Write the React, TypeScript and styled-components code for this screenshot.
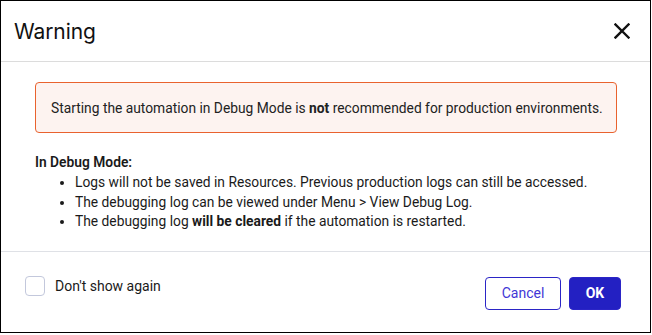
import React from "react";
import styled, { createGlobalStyle } from "styled-components";

const Global = createGlobalStyle`
  html, body { margin: 0; padding: 0; background: #ffffff; }
  body { font-family: Roboto, "Liberation Sans", Arial, sans-serif; color: #1a1a1a; }
  * { box-sizing: border-box; }
`;

const Dialog = styled.div`
  width: 651px;
  height: 333px;
  border: 1px solid #000;
  background: #fff;
  display: flex;
  flex-direction: column;
`;

const Header = styled.div`
  height: 61px;
  display: flex;
  align-items: center;
  justify-content: space-between;
  padding: 0 20px 0 13px;
  border-bottom: 1px solid #dcdcdc;
`;

const Title = styled.h1`
  margin: 0;
  font-family: Inter, Roboto, sans-serif;
  font-size: 21px;
  font-weight: 400;
  color: #111;
  letter-spacing: -0.1px;
`;

const CloseButton = styled.button`
  border: 0;
  background: none;
  padding: 0;
  width: 16px;
  height: 16px;
  display: flex;
  cursor: pointer;
`;

const Body = styled.div`
  flex: 1;
  padding: 20px 33px 0 34px;
  border-bottom: 1px solid #dfe1e6;
`;

const Alert = styled.div`
  height: 51px;
  border: 1px solid #e9622e;
  border-radius: 4px;
  background: #fdf3f0;
  display: flex;
  align-items: center;
  padding: 0 15px;
  font-size: 13.8px;
  color: #222;
  white-space: nowrap;
`;

const Section = styled.div`
  margin-top: 20px;
  font-size: 13.8px;
  color: #1a1a1a;
`;

const SectionTitle = styled.div`
  font-weight: 600;
  line-height: 19px;
`;

const List = styled.ul`
  margin: 1px 0 0;
  padding-left: 40px;
  line-height: 19.5px;
`;

const Footer = styled.div`
  height: 80px;
  display: flex;
  align-items: center;
  justify-content: space-between;
  padding: 0 29px 0 24px;
`;

const CheckLabel = styled.label`
  display: flex;
  align-items: center;
  gap: 10px;
  font-size: 14px;
  color: #1a1a1a;
  margin-top: -12px;
`;

const Box = styled.span`
  width: 20px;
  height: 20px;
  border: 1.5px solid #c3c8dc;
  border-radius: 4px;
  background: #fff;
`;

const Buttons = styled.div`
  display: flex;
  gap: 8px;
  margin-top: 2px;
`;

const Button = styled.button<{ $primary?: boolean }>`
  height: 33px;
  padding: 0 ${(p) => (p.$primary ? "14px" : "15px")};
  border-radius: 4px;
  font-family: inherit;
  font-size: 14px;
  font-weight: ${(p) => (p.$primary ? 700 : 400)};
  border: 1px solid #2b25c6;
  background: ${(p) => (p.$primary ? "#2320c2" : "#fff")};
  color: ${(p) => (p.$primary ? "#fff" : "#4236d6")};
  min-width: ${(p) => (p.$primary ? "52px" : "76px")};
`;

export default function App() {
  return (
    <>
      <Global />
      <Dialog>
        <Header>
          <Title>Warning</Title>
          <CloseButton aria-label="Close">
            <svg width="16" height="16" viewBox="0 0 16 16">
              <path d="M1.5 1.5 L14.5 14.5 M14.5 1.5 L1.5 14.5" stroke="#111" strokeWidth="2.4" strokeLinecap="square" />
            </svg>
          </CloseButton>
        </Header>
        <Body>
          <Alert>
            <span>
              Starting the automation in Debug Mode is <b>not</b> recommended for production environments.
            </span>
          </Alert>
          <Section>
            <SectionTitle>In Debug Mode:</SectionTitle>
            <List>
              <li>Logs will not be saved in Resources. Previous production logs can still be accessed.</li>
              <li>The debugging log can be viewed under Menu &gt; View Debug Log.</li>
              <li>
                The debugging log <b>will be cleared</b> if the automation is restarted.
              </li>
            </List>
          </Section>
        </Body>
        <Footer>
          <CheckLabel>
            <Box />
            Don't show again
          </CheckLabel>
          <Buttons>
            <Button>Cancel</Button>
            <Button $primary>OK</Button>
          </Buttons>
        </Footer>
      </Dialog>
    </>
  );
}
